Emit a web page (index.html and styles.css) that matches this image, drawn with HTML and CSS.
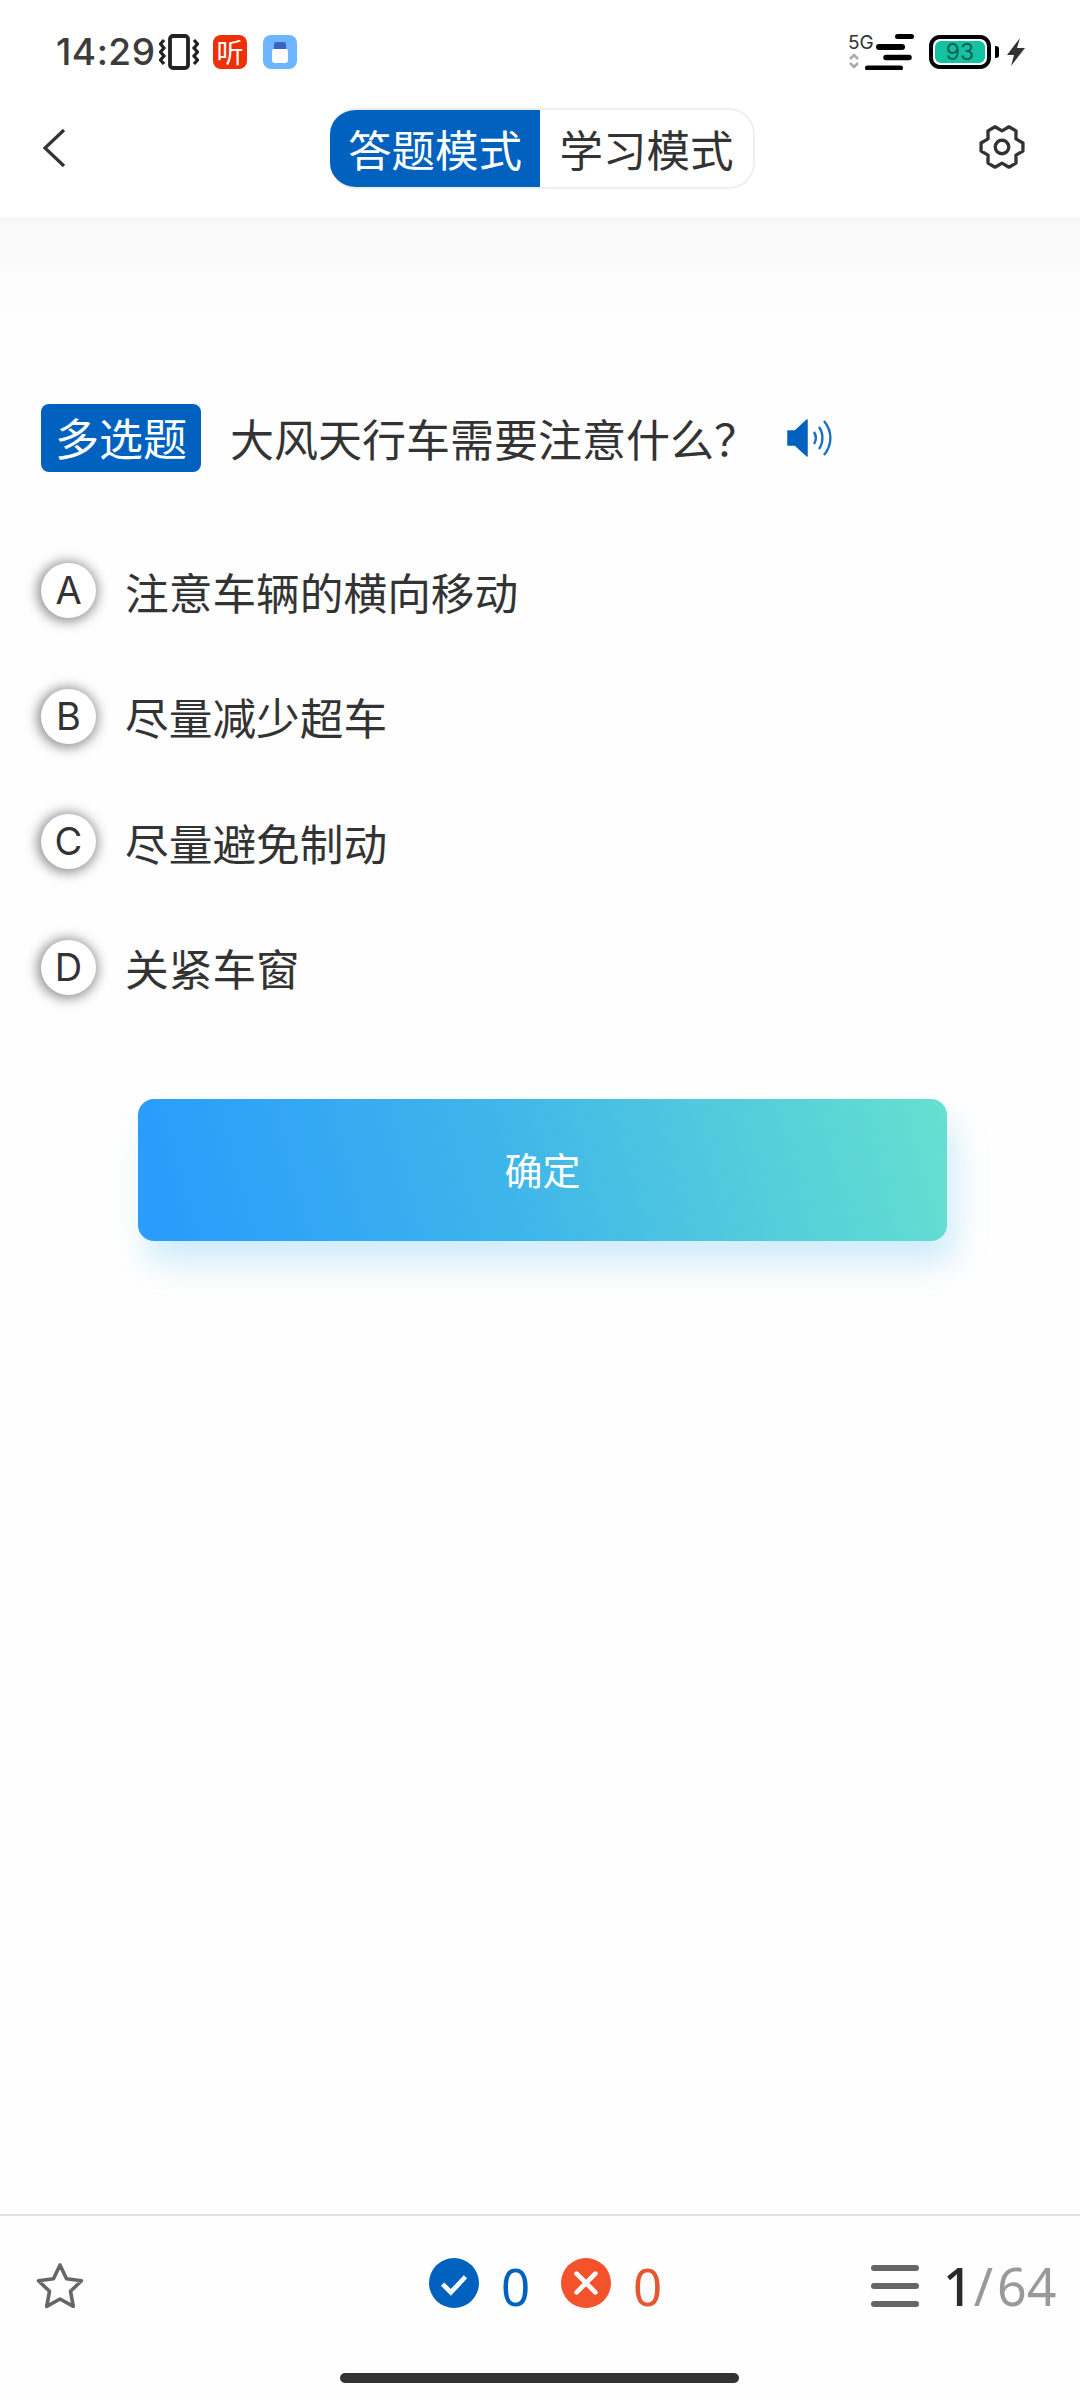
FILE: index.html
```html
<!DOCTYPE html>
<html lang="zh-CN">
<head>
<meta charset="utf-8">
<title>答题模式</title>
<link rel="stylesheet" href="styles.css">
</head>
<body>
<div class="page">
  <header class="status">
    <div class="status-left">
      <span class="time">14:29</span>
      <svg class="ic-vibrate" viewBox="0 0 40 36" width="40" height="36"><rect x="11" y="2" width="18" height="32" rx="3" fill="none" stroke="#222" stroke-width="3.800"/><path d="M5 6 1.500 10 5 14l-3.500 4L5 22l-3.500 4L5 30M35 6l3.500 4-3.500 4 3.500 4-3.500 4 3.500 4-3.500 4" fill="none" stroke="#222" stroke-width="3.200"/></svg>
      <span class="app-ting">听</span>
      <span class="app-usb"><span class="usb-top"></span><span class="usb-body"></span></span>
    </div>
    <div class="status-right">
      <div class="net"><span class="net-5g">5G</span><svg class="net-arrows" viewBox="0 0 12 16" width="12" height="16"><path d="M2 6l4-4 4 4M2 10l4 4 4-4" fill="none" stroke="#aaa" stroke-width="2.500"/></svg></div>
      <svg class="signal" viewBox="0 0 50 36" width="50" height="36"><g stroke="#000" stroke-linecap="round" fill="none"><path d="M32.500 2.500H46.500" stroke-width="5"/><path d="M14 13H37" stroke-width="6"/><path d="M21 23.500H44" stroke-width="5.500"/><path d="M2.500 34H35.500" stroke-width="5"/></g></svg>
      <div class="battery"><span class="batt-fill">93</span></div>
      <span class="batt-nub"></span>
      <svg class="bolt" viewBox="0 0 18 28" width="18" height="28"><path d="M13 0 0 17h7l-3 11 14-18h-8z" fill="#333"/></svg>
    </div>
  </header>

  <nav class="nav">
    <svg class="back" viewBox="0 0 24 40" width="24" height="40"><path d="M22 2 3 20l19 18" fill="none" stroke="#333" stroke-width="3.200"/></svg>
    <div class="tabs">
      <span class="tab tab-on">答题模式</span>
      <span class="tab">学习模式</span>
    </div>
    <svg class="gear" viewBox="0 0 48 48" width="50" height="50"><path d="M44.100 27.900 37.400 31.750 37.450 39.470 30.670 43.380 24 39.500 17.330 43.380 10.550 39.470 10.600 31.750 3.900 27.900V20.100L10.600 16.250 10.550 8.530 17.330 4.620 24 8.500 30.670 4.620 37.450 8.530 37.400 16.250 44.100 20.100Z" fill="none" stroke="#333" stroke-width="3.200" stroke-linejoin="round"/><circle cx="24" cy="24" r="6.500" fill="none" stroke="#333" stroke-width="3.200"/></svg>
  </nav>
  <div class="shade"></div>

  <main class="main">
    <div class="question">
      <span class="tag">多选题</span>
      <span class="q-text">大风天行车需要注意什么？</span>
      <svg class="speaker" viewBox="0 0 46 38" width="46" height="38"><path d="M1 12h7L20 1v36L8 26H1z" fill="#0062be" stroke="#0062be" stroke-linejoin="round" stroke-width="1.500"/><path d="M27 13c2.500 4 2.500 8 0 12M32 8c4.500 6 4.500 16 0 22M37 2c8.500 10 8.500 24 0 34" fill="none" stroke="#1a6fbe" stroke-width="2.400"/></svg>
    </div>
    <ul class="options">
      <li class="option"><span class="letter">A</span><span class="opt-text">注意车辆的横向移动</span></li>
      <li class="option"><span class="letter">B</span><span class="opt-text">尽量减少超车</span></li>
      <li class="option"><span class="letter">C</span><span class="opt-text">尽量避免制动</span></li>
      <li class="option"><span class="letter">D</span><span class="opt-text">关紧车窗</span></li>
    </ul>
    <div class="confirm">确定</div>
  </main>

  <footer class="toolbar">
    <div class="tools">
      <svg class="star" viewBox="0 0 50 48" width="50" height="48"><path d="M25 3 31.500 16.800 46.500 18.800 35.500 29.300 38.300 44.300 25 37 11.700 44.300 14.500 29.300 3.500 18.800 18.500 16.800Z" fill="none" stroke="#666" stroke-width="3.600" stroke-linejoin="round"/></svg>
      <div class="score">
        <svg class="badge" viewBox="0 0 48 48" width="50" height="50"><circle cx="24" cy="24" r="24" fill="#0062be"/><path d="M13 25l8 8 14-15" fill="none" stroke="#fff" stroke-width="4.500"/></svg>
        <span class="count count-ok">0</span>
        <svg class="badge badge-bad" viewBox="0 0 48 48" width="50" height="50"><circle cx="24" cy="24" r="24" fill="#f4522b"/><path d="M15 15l18 18M33 15 15 33" fill="none" stroke="#fff" stroke-width="4.500" stroke-linecap="round"/></svg>
        <span class="count count-bad">0</span>
      </div>
      <div class="progress">
        <span class="menu"><i></i><i></i><i></i></span>
        <span class="cur">1</span><span class="slash">/</span><span class="total">64</span>
      </div>
    </div>
    <div class="home"></div>
  </footer>
</div>
</body>
</html>
```
FILE: styles.css
```css
* { box-sizing: border-box; }
html, body { margin: 0; padding: 0; background: #fefefe; }
body { font-family: "Noto Sans CJK SC", "Noto Sans", sans-serif; color: #333; }
.page { width: 1080px; height: 2400px; display: flex; flex-direction: column; overflow: hidden; }

.status { height: 100px; flex: none; padding: 34px 55px 0 56px; display: flex; justify-content: space-between; align-items: flex-start; background: #fff; }
.status-left { display: flex; align-items: center; height: 36px; }
.time { font-family: Inter, sans-serif; font-weight: 500; font-size: 37px; line-height: 36px; letter-spacing: .5px; color: #3c3c3c; width: 103px; }
.ic-vibrate { display: block; }
.app-ting { width: 34px; height: 34px; margin-left: 14px; border-radius: 8px; background: #ee2f0a; color: #fff; font-size: 27px; line-height: 34px; text-align: center; }
.app-usb { width: 34px; height: 34px; margin-left: 16px; border-radius: 8px; background: #6db6ff; display: flex; flex-direction: column; align-items: center; justify-content: center; }
.usb-top { width: 12px; height: 7px; background: #3b62c4; border-radius: 2px 2px 0 0; }
.usb-body { width: 16px; height: 14px; background: #fff; border-radius: 2px 2px 3px 3px; }
.status-right { display: flex; align-items: center; height: 36px; }
.net { width: 17px; display: flex; flex-direction: column; align-items: flex-start; margin-top: -1px; }
.net-5g { font-family: Inter, sans-serif; font-size: 19px; line-height: 17px; color: #333; white-space: nowrap; }
.net-arrows { display: block; margin-top: 2px; }
.signal { display: block; }
.battery { width: 62px; height: 34px; margin-left: 14px; border: 4px solid #000; border-radius: 11px; padding: 2px; background: #fff; display: flex; }
.batt-fill { flex: 1; background: #14c2a3; border-radius: 6px; color: #0c5f52; font-family: Inter, sans-serif; font-size: 23px; line-height: 23px; text-align: center; }
.batt-nub { width: 4px; height: 12px; margin-left: 4px; background: #000; border-radius: 0 3px 3px 0; }
.bolt { display: block; margin-left: 8px; }

.nav { height: 117px; flex: none; padding: 8px 0 0 42px; display: flex; align-items: flex-start; background: #fff; }
.back { display: block; margin-top: 20px; }
.gear { display: block; margin: 14px 0 0 222px; }
.tabs { display: flex; height: 81px; margin-left: 264px; border: 2px solid #eee; border-left: 0; border-radius: 26px; overflow: hidden; background: #fff; }
.tab { font-size: 43.500px; line-height: 78px; width: 213px; text-align: center; color: #333; }
.tab-on { width: 210px; background: #0062be; color: #fff; margin: -2px 0; line-height: 80px; padding-top: 1px; }
.shade { height: 103px; flex: none; background: linear-gradient(#f8f8f8, #fefefe); }

.main { flex: 1; padding: 84px 0 0 41px; }
.question { display: flex; align-items: center; height: 68px; }
.tag { width: 160px; height: 68px; border-radius: 8px; background: #0062be; color: #fff; font-size: 44px; line-height: 66px; text-align: center; }
.q-text { margin-left: 29px; font-size: 44px; line-height: 68px; color: #333; width: 557px; white-space: nowrap; }
.speaker { display: block; }
.options { list-style: none; margin: 56px 0 0; padding: 0; }
.option { height: 125.500px; display: flex; align-items: center; }
.letter { width: 55px; height: 55px; border-radius: 50%; background: #fff; box-shadow: -1px 1px 12px 3px rgba(0,0,0,.42); font-family: Inter, sans-serif; font-size: 38px; line-height: 55px; text-align: center; color: #333; }
.opt-text { margin-left: 29px; font-size: 43.700px; line-height: 60px; color: #333; }
.confirm { width: 809px; height: 142px; margin: 69px 0 0 97px; border-radius: 16px; background: linear-gradient(75deg, #2a9dfb 5%, #3eb5ea 45%, #66e0cf 100%); box-shadow: 8px 22px 32px rgba(90,190,240,.28); color: #fff; font-size: 38px; line-height: 140px; text-align: center; }

.toolbar { height: 186px; flex: none; border-top: 2px solid #e0e0e0; background: #fefefe; display: flex; flex-direction: column; }
.tools { height: 156px; display: flex; align-items: flex-start; padding: 42px 0 0 35px; }
.star { display: block; margin-top: 4px; }
.score { margin-left: 344px; display: flex; align-items: center; height: 50px; }
.badge { display: block; }
.badge-bad { margin-left: 31px; }
.count { font-family: "Noto Sans", sans-serif; font-size: 51px; line-height: 48px; margin-left: 22px; width: 29px; padding-top: 6px; }
.count-ok { color: #0062be; }
.count-bad { color: #e4572f; }
.progress { margin: 3px 0 0 209px; display: flex; align-items: center; height: 50px; }
.menu { width: 48px; height: 42px; display: flex; flex-direction: column; justify-content: space-between; margin-right: 24px; }
.menu i { display: block; height: 6px; border-radius: 3px; background: #666; }
.cur { font-family: "Noto Sans", sans-serif; font-weight: 500; font-size: 52px; line-height: 50px; color: #2b2b2b; }
.slash, .total { font-family: "Noto Sans", sans-serif; font-size: 52px; line-height: 50px; color: #999; }
.slash { margin-left: 1px; }
.total { margin-left: 4px; }
.home { width: 399px; height: 10px; margin: 1px 0 0 340px; border-radius: 5px; background: #333; }
```
